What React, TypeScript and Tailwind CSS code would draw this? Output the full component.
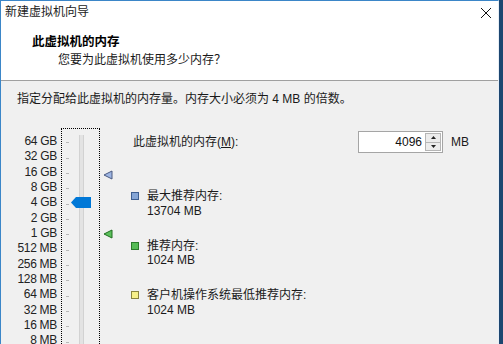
import React from "react";

const FONT = { fontFamily: '"Liberation Sans", "Noto Sans CJK SC", sans-serif' };

const labels = [
  "64 GB", "32 GB", "16 GB", "8 GB", "4 GB", "2 GB", "1 GB",
  "512 MB", "256 MB", "128 MB", "64 MB", "32 MB", "16 MB", "8 MB",
];

function Tri({ fill, stroke }: { fill: string; stroke: string }) {
  return (
    <svg width="10" height="10" viewBox="0 0 10 10">
      <path d="M1 5 L9 1 L9 9 Z" fill={fill} stroke={stroke} strokeWidth="1" strokeLinejoin="round" />
    </svg>
  );
}

function Item({ color, border, title, value }: { color: string; border: string; title: string; value: string }) {
  return (
    <div className="flex">
      <div className="w-[16px] pt-[3px]">
        <div className="w-[8px] h-[8px] border" style={{ backgroundColor: color, borderColor: border }} />
      </div>
      <div className="leading-[14.5px] text-[12px] text-[#1a1a1a]">
        <div>{title}</div>
        <div>{value}</div>
      </div>
    </div>
  );
}

export default function App() {
  return (
    <div className="w-[503px] h-[344px] overflow-hidden bg-[#1c4670] flex text-[12px]" style={FONT}>
      <div className="w-[499px] h-full bg-[#f0f0f0] border-l border-t border-[#3b86c8] border-r border-r-[#e6eef6] flex flex-col">
        {/* title bar */}
        <div className="h-[21px] bg-white flex items-center justify-between pl-[4px] pr-[6px] shrink-0">
          <span className="text-[12px] leading-[16px] text-[#222]">新建虚拟机向导</span>
          <svg width="12" height="12" viewBox="0 0 12 12" className="mt-[2px]">
            <path d="M1 1 L11 11 M11 1 L1 11" stroke="#111" strokeWidth="1" />
          </svg>
        </div>
        {/* header */}
        <div className="h-[59px] bg-white border-b border-[#a0a0a0] shrink-0 pt-[12px] pl-[31px]">
          <div className="font-bold text-[12.5px] leading-[16px] text-black">此虚拟机的内存</div>
          <div className="pl-[26px] mt-[2px] text-[12px] leading-[16px] text-[#1a1a1a]">您要为此虚拟机使用多少内存？</div>
        </div>
        {/* body */}
        <div className="flex-1 pt-[10px]">
          <div className="pl-[16px] text-[12px] leading-[16px] text-[#1a1a1a]">
            指定分配给此虚拟机的内存量。内存大小必须为 4 MB 的倍数。
          </div>
          <div className="flex mt-[21px]">
            {/* labels */}
            <div className="w-[56px] pt-[6px] text-right text-[12px] text-[#222] tracking-[-0.3px]">
              {labels.map((l) => (
                <div key={l} className="h-[15.35px] leading-[15.35px]">{l}</div>
              ))}
            </div>
            {/* slider box */}
            <div className="ml-[4px] w-[39px] h-[240px] border border-dotted border-black relative">
              <div className="absolute left-[4px] top-[6px] flex flex-col">
                {labels.map((l) => (
                  <div key={l} className="h-[15.35px] flex items-center">
                    <div className="w-[3px] h-[1px] bg-[#b8b8b8]" />
                  </div>
                ))}
              </div>
              <div className="absolute left-[17px] top-[6px] bottom-0 w-[5px] bg-[#e3e3e3] border-x border-[#d2d2d2]" />
              <div className="absolute left-[9px] top-[68px]">
                <svg width="20" height="11" viewBox="0 0 20 11">
                  <path d="M0 5.5 L5 0 L20 0 L20 11 L5 11 Z" fill="#0078d7" />
                </svg>
              </div>
            </div>
            {/* markers */}
            <div className="w-[31px] relative">
              <div className="absolute left-[3px] top-[42px]">
                <Tri fill="#9db5e3" stroke="#4a5a80" />
              </div>
              <div className="absolute left-[3px] top-[101px]">
                <Tri fill="#5cc05c" stroke="#1f6e1f" />
              </div>
            </div>
            {/* right content */}
            <div className="flex flex-col">
              <div className="flex items-center mt-[3px] h-[22px]">
                <div className="w-[227px] pl-[2px] text-[#1a1a1a]">
                  此虚拟机的内存(<span className="underline">M</span>):
                </div>
                <div className="w-[85px] h-[22px] border border-[#a5a5a5] bg-white flex">
                  <div className="flex-1 text-right pr-[3px] leading-[20px] text-[#111]">4096</div>
                  <div className="w-[16px] flex flex-col my-[1px] mr-[1px]">
                    <div className="flex-1 bg-[#ececec] border border-[#b5b5b5] flex items-center justify-center">
                      <svg width="5" height="3" viewBox="0 0 5 3"><path d="M0 3 L2.5 0 L5 3 Z" fill="#222" /></svg>
                    </div>
                    <div className="flex-1 bg-[#ececec] border border-t-0 border-[#b5b5b5] flex items-center justify-center">
                      <svg width="5" height="3" viewBox="0 0 5 3"><path d="M0 0 L5 0 L2.5 3 Z" fill="#222" /></svg>
                    </div>
                  </div>
                </div>
                <div className="ml-[8px] text-[#1a1a1a]">MB</div>
              </div>
              <div className="mt-[36px] flex flex-col gap-[20.5px]">
                <Item color="#86a6d6" border="#3e5f91" title="最大推荐内存:" value="13704 MB" />
                <Item color="#55bb55" border="#2a7a2a" title="推荐内存:" value="1024 MB" />
                <Item color="#f7f08a" border="#8a8440" title="客户机操作系统最低推荐内存:" value="1024 MB" />
              </div>
            </div>
          </div>
        </div>
      </div>
    </div>
  );
}
